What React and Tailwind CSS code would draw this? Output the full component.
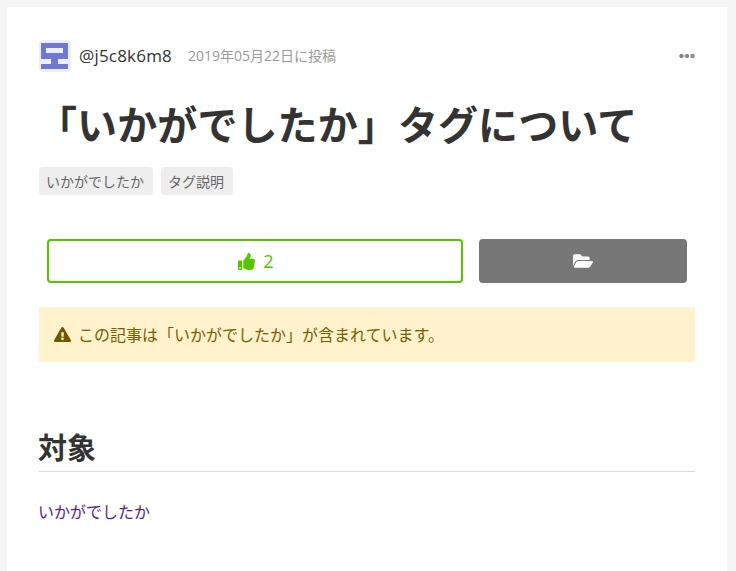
import { FaThumbsUp, FaFolderOpen, FaExclamationTriangle, FaEllipsisH } from 'react-icons/fa';

const font = "font-['Open_Sans','Noto_Sans_CJK_JP',sans-serif]";

function Avatar() {
    return (
        <svg width="32" height="32" viewBox="0 0 32 32" className="rounded-[3px] shrink-0">
            <rect width="32" height="32" fill="#eeeef6" />
            <path d="M2 3h27v16h-10v5h10v5H2v-5h10v-5H2z M7 8v5h17V8z" fill="#6f79d3" fillRule="evenodd" />
        </svg>
    );
}

export default function App() {
    const tags = ['いかがでしたか', 'タグ説明'];

    return (
        <div className={`${font} h-[571px] overflow-hidden bg-[#f5f5f5] pt-[7px] pl-[7px] pr-[9px]`}>
            <div className="bg-white h-full px-8 pt-[33px]">
                <div className="flex items-center h-[32px]">
                    <Avatar />
                    <span className="ml-2 text-[17px] tracking-[0.2px] text-[#333333]">@j5c8k6m8</span>
                    <span className="ml-4 text-[14px] text-[#999999] -translate-y-px">2019年05月22日に投稿</span>
                    <FaEllipsisH className="ml-auto text-[#888888] text-[16px]" />
                </div>

                <h1 className="mt-[23px] h-[60px] flex items-center text-[40px] font-bold text-[#333333] leading-none tracking-[0.1px] whitespace-nowrap -ml-[2px]">
                    「いかがでしたか」タグについて
                </h1>

                <div className="mt-[12px] flex gap-2">
                    {tags.map(tag => (
                        <span key={tag} className="h-[28px] flex items-center rounded-[4px] bg-[#eeeeee] pl-[7px] pr-[9px] text-[14px] text-[#666666]">
                            {tag}
                        </span>
                    ))}
                </div>

                <div className="mt-[44px] mx-2 flex gap-4">
                    <button className="w-[416px] h-[44px] flex items-center justify-center gap-2 rounded-[4px] border-2 border-[#55c500] bg-white pl-[2px] text-[#55c500] text-[18px]">
                        <FaThumbsUp className="text-[17px]" />
                        <span>2</span>
                    </button>
                    <button className="w-[208px] h-[44px] flex items-center justify-center rounded-[4px] bg-[#777777] text-white">
                        <FaFolderOpen className="text-[20px]" />
                    </button>
                </div>

                <div className="mt-6 h-[55px] flex items-center bg-[#fff2cc] pl-[15px] pr-4 text-[16px] text-[#7a5c00]">
                    <FaExclamationTriangle className="text-[17px] text-[#735600] shrink-0" />
                    <span className="ml-[7px]">この記事は「いかがでしたか」が含まれています。</span>
                </div>

                <h2 className="mt-[66px] h-[44px] flex items-center pb-[3px] border-b border-[#dddddd] text-[29px] font-bold text-[#333333]">
                    <span className="-ml-px">対象</span>
                </h2>

                <p className="mt-[28px] -ml-px text-[16px] leading-[24px] text-[#5a1a9a]">いかがでしたか</p>
            </div>
        </div>
    );
}
